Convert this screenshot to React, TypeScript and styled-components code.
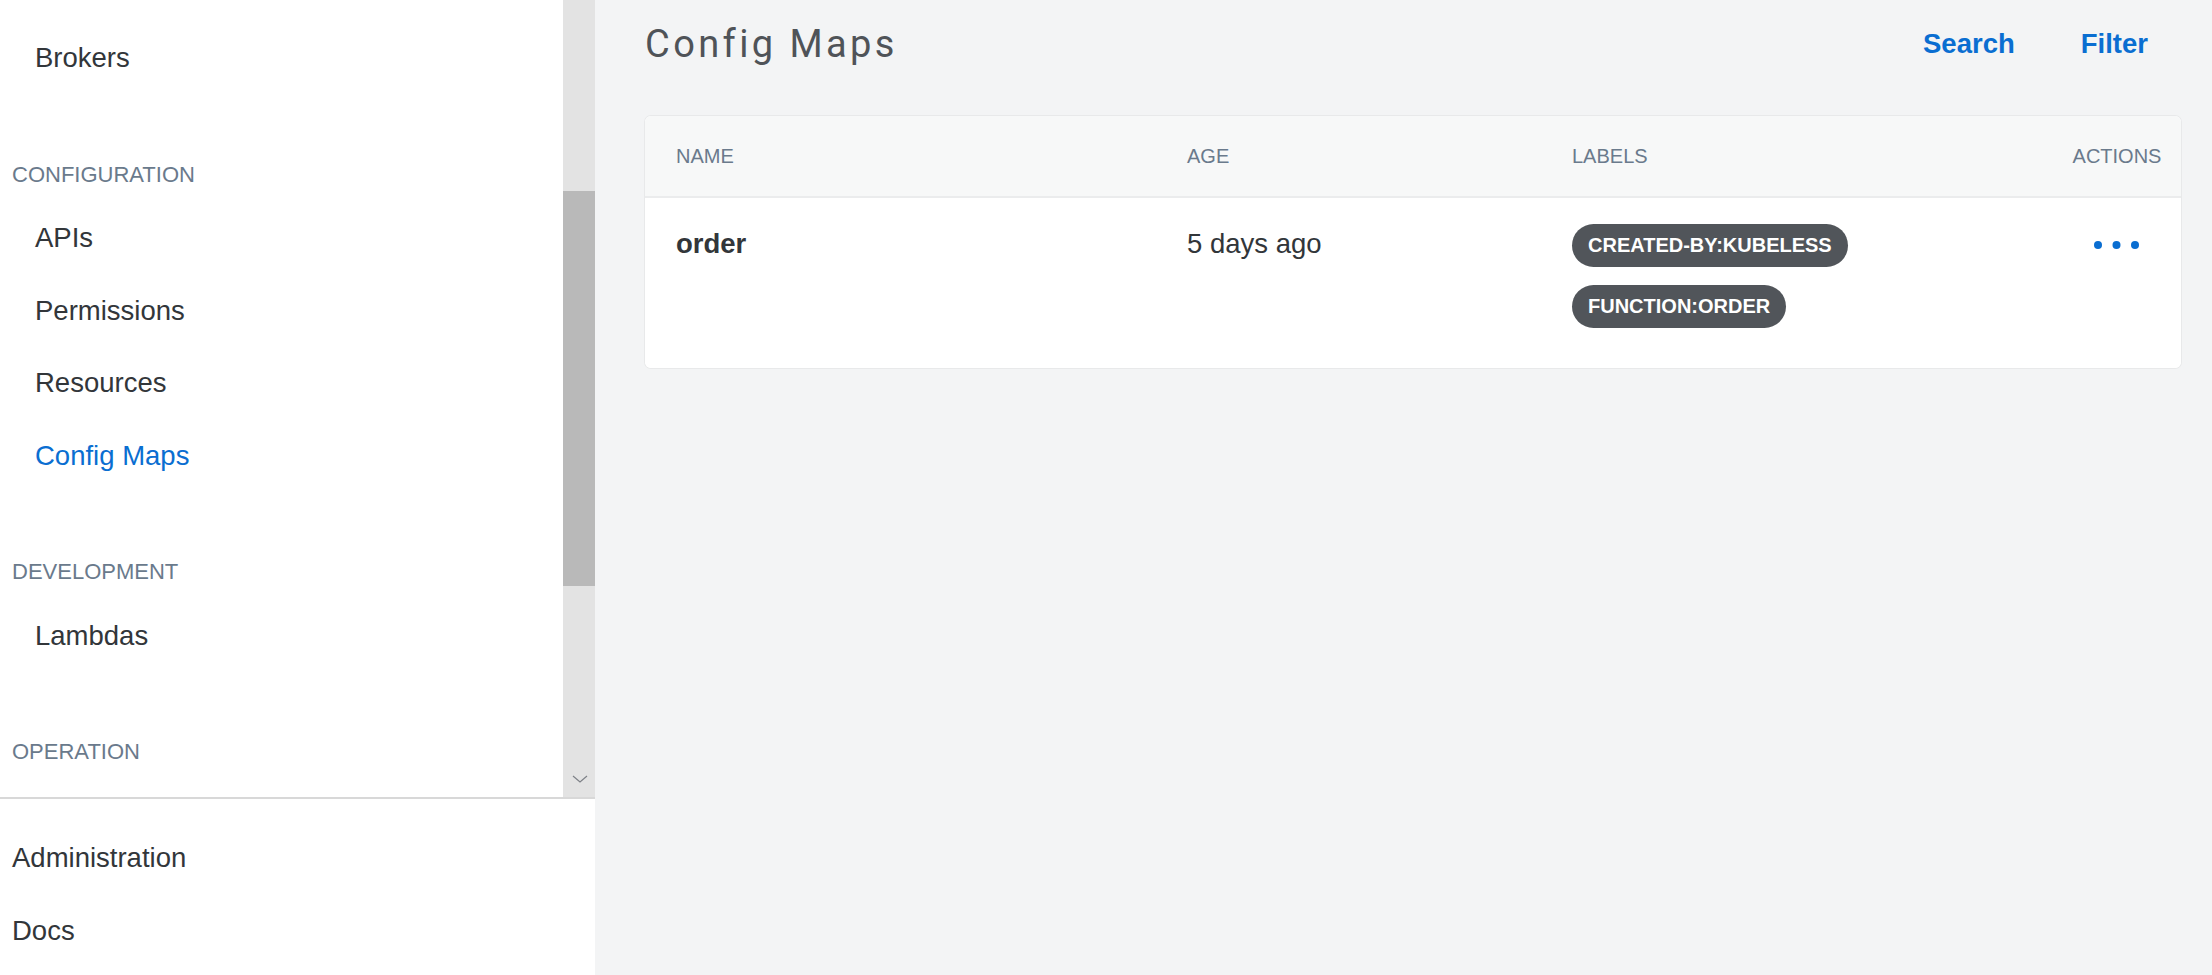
import React from "react";
import styled, { createGlobalStyle } from "styled-components";

const GlobalStyle = createGlobalStyle`
  html, body {
    margin: 0;
    padding: 0;
    background: #f3f4f5;
    font-family: "Liberation Sans", Arial, sans-serif;
  }
  * { box-sizing: border-box; }
`;

const Page = styled.div`
  display: flex;
  width: 100%;
  height: 975px;
  overflow: hidden;
`;

const Sidebar = styled.aside`
  width: 595px;
  flex: 0 0 595px;
  display: flex;
  flex-direction: column;
  background: #ffffff;
`;

const ScrollArea = styled.div`
  display: flex;
  height: 799px;
  flex: 0 0 799px;
  border-bottom: 2px solid #d8d8d8;
`;

const NavList = styled.nav`
  flex: 1;
  overflow: hidden;
  padding-top: 22px;
`;

const ScrollTrack = styled.div`
  width: 32px;
  flex: 0 0 32px;
  background: #e3e3e3;
  display: flex;
  flex-direction: column;
  align-items: center;
`;

const ScrollThumb = styled.div`
  width: 100%;
  margin-top: 191px;
  height: 395px;
  background: #b9b9b9;
`;

const ScrollArrow = styled.svg`
  margin-top: auto;
  margin-bottom: 14px;
  margin-left: 1px;
`;

const Group = styled.div<{ $spaced: boolean }>`
  margin-top: ${(p) => (p.$spaced ? "53px" : "0")};
`;

const GroupTitle = styled.div`
  height: 54px;
  display: flex;
  align-items: center;
  padding-left: 12px;
  font-size: 22px;
  color: #6a7a8c;
  text-transform: uppercase;
`;

const NavItem = styled.a<{ $active?: boolean; $indent?: boolean }>`
  display: flex;
  align-items: center;
  height: 72.67px;
  padding-left: ${(p) => (p.$indent ? "35px" : "12px")};
  font-size: 27.5px;
  color: ${(p) => (p.$active ? "#0a6ed1" : "#32363a")};
  text-decoration: none;
  cursor: pointer;
`;

const BottomNav = styled.div`
  padding-top: 23px;
`;

const Main = styled.main`
  flex: 1;
  padding: 0 31px 0 50px;
`;

const Header = styled.header`
  height: 88px;
  display: flex;
  align-items: center;
  justify-content: space-between;
`;

const Title = styled.h1`
  margin: 0;
  font-family: Roboto, "Liberation Sans", sans-serif;
  font-weight: 400;
  font-size: 38px;
  letter-spacing: 3.4px;
  color: #4f5358;
`;

const HeaderActions = styled.div`
  display: flex;
`;

const LinkButton = styled.button`
  border: none;
  background: transparent;
  padding: 0 33px;
  font-family: "Liberation Sans", Arial, sans-serif;
  font-weight: 700;
  font-size: 27.5px;
  color: #0a6ed1;
  cursor: pointer;
`;

const Card = styled.section`
  margin-top: 28px;
  background: #ffffff;
  border-radius: 6px;
  box-shadow: 0 0 0 1px #e8e9ea;
  overflow: hidden;
`;

const Row = styled.div<{ $head?: boolean }>`
  display: grid;
  grid-template-columns: 511px 385px 1fr 92px;
  padding: ${(p) => (p.$head ? "0 18px 0 31px" : "26px 18px 40px 31px")};
  height: ${(p) => (p.$head ? "82px" : "auto")};
  align-items: ${(p) => (p.$head ? "center" : "start")};
  background: ${(p) => (p.$head ? "#f7f8f8" : "#ffffff")};
  border-bottom: ${(p) => (p.$head ? "2px solid #ebeced" : "none")};
`;

const HeadCell = styled.div<{ $center?: boolean }>`
  font-size: 20px;
  color: #6a7a8c;
  text-transform: uppercase;
  text-align: ${(p) => (p.$center ? "center" : "left")};
  white-space: nowrap;
`;

const Cell = styled.div<{ $bold?: boolean }>`
  font-size: 27.5px;
  line-height: 39px;
  font-weight: ${(p) => (p.$bold ? 700 : 400)};
  color: #32363a;
`;

const Labels = styled.div`
  display: flex;
  flex-direction: column;
  align-items: flex-start;
  gap: 18px;
`;

const Pill = styled.span`
  display: inline-flex;
  align-items: center;
  height: 43px;
  padding: 0 16px 0 16px;
  border-radius: 22px;
  background: #51555a;
  color: #ffffff;
  font-weight: 700;
  font-size: 20px;
  white-space: nowrap;
`;

const ActionsCell = styled.div`
  display: flex;
  justify-content: center;
  padding-top: 17px;
`;

const DotsButton = styled.button`
  border: none;
  background: transparent;
  padding: 0;
  display: flex;
  cursor: pointer;
`;

const groups: { title?: string; items: { label: string; active?: boolean }[] }[] = [
  { items: [{ label: "Brokers" }] },
  {
    title: "Configuration",
    items: [
      { label: "APIs" },
      { label: "Permissions" },
      { label: "Resources" },
      { label: "Config Maps", active: true },
    ],
  },
  { title: "Development", items: [{ label: "Lambdas" }] },
  { title: "Operation", items: [] },
];

export default function App() {
  return (
    <>
      <GlobalStyle />
      <Page>
        <Sidebar>
          <ScrollArea>
            <NavList>
              {groups.map((g, i) => (
                <Group key={i} $spaced={!!g.title}>
                  {g.title && <GroupTitle>{g.title}</GroupTitle>}
                  {g.items.map((it) => (
                    <NavItem key={it.label} $indent $active={it.active}>
                      {it.label}
                    </NavItem>
                  ))}
                </Group>
              ))}
            </NavList>
            <ScrollTrack>
              <ScrollThumb />
              <ScrollArrow width="16" height="8" viewBox="0 0 16 8">
                <polyline points="1,1 8,7 15,1" fill="none" stroke="#7d8087" strokeWidth="1.2" />
              </ScrollArrow>
            </ScrollTrack>
          </ScrollArea>
          <BottomNav>
            <NavItem>Administration</NavItem>
            <NavItem>Docs</NavItem>
          </BottomNav>
        </Sidebar>
        <Main>
          <Header>
            <Title>Config Maps</Title>
            <HeaderActions>
              <LinkButton>Search</LinkButton>
              <LinkButton>Filter</LinkButton>
            </HeaderActions>
          </Header>
          <Card>
            <Row $head>
              <HeadCell>Name</HeadCell>
              <HeadCell>Age</HeadCell>
              <HeadCell>Labels</HeadCell>
              <HeadCell $center>Actions</HeadCell>
            </Row>
            <Row>
              <Cell $bold>order</Cell>
              <Cell>5 days ago</Cell>
              <Labels>
                <Pill>CREATED-BY:KUBELESS</Pill>
                <Pill>FUNCTION:ORDER</Pill>
              </Labels>
              <ActionsCell>
                <DotsButton aria-label="actions">
                  <svg width="46" height="8" viewBox="0 0 46 8">
                    <circle cx="4" cy="4" r="4" fill="#0a6ed1" />
                    <circle cx="22.5" cy="4" r="4" fill="#0a6ed1" />
                    <circle cx="41" cy="4" r="4" fill="#0a6ed1" />
                  </svg>
                </DotsButton>
              </ActionsCell>
            </Row>
          </Card>
        </Main>
      </Page>
    </>
  );
}
